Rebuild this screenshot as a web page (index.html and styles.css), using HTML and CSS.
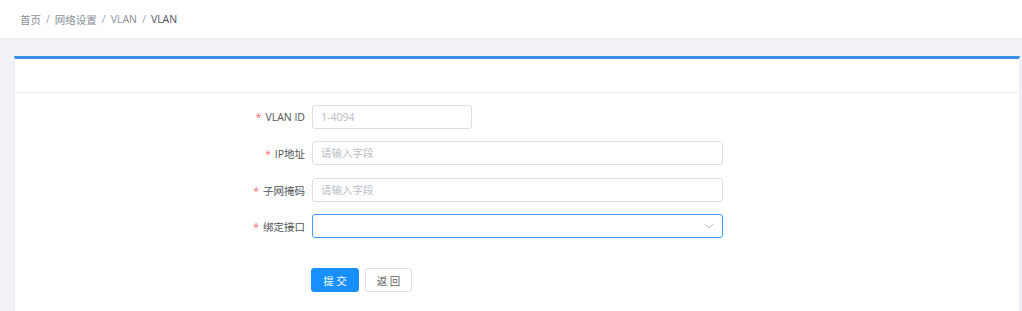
FILE: index.html
```html
<!DOCTYPE html>
<html lang="zh">
<head>
  <meta charset="UTF-8">
  <title>VLAN</title>
  <link rel="stylesheet" href="styles.css">
</head>
<body>
  <div class="header">
    <span class="crumb">首页</span><span class="sep">/</span>
    <span class="crumb">网络设置</span><span class="sep">/</span>
    <span class="crumb">VLAN</span><span class="sep">/</span>
    <span class="crumb current">VLAN</span>
  </div>
  <div class="main">
    <div class="card">
      <div class="card-head"></div>
      <div class="card-body">
        <div class="form-row">
          <label class="form-label"><span class="req">*</span>VLAN ID</label>
          <input class="input short" placeholder="1-4094">
        </div>
        <div class="form-row">
          <label class="form-label"><span class="req">*</span>IP地址</label>
          <input class="input" placeholder="请输入字段">
        </div>
        <div class="form-row">
          <label class="form-label"><span class="req">*</span>子网掩码</label>
          <input class="input" placeholder="请输入字段">
        </div>
        <div class="form-row">
          <label class="form-label"><span class="req">*</span>绑定接口</label>
          <div class="input select">
            <svg class="arrow" width="10" height="6" viewBox="0 0 10 6"><path d="M1 1 L5 5 L9 1" fill="none" stroke="#c0c4cc" stroke-width="1"/></svg>
          </div>
        </div>
        <div class="btn-row">
          <button class="btn primary">提 交</button>
          <button class="btn">返 回</button>
        </div>
      </div>
    </div>
  </div>
</body>
</html>
```

FILE: styles.css
```css
body {
  margin: 0;
  background: #f0f2f5;
  font-family: "Open Sans", "Noto Sans CJK SC", sans-serif;
  font-size: 10.5px;
  color: #606266;
}
.header {
  height: 39px;
  background: #fff;
  border-bottom: 1px solid #e8eaee;
  display: flex;
  align-items: center;
  padding-left: 20px;
  box-sizing: border-box;
}
.crumb {
  color: #8a8e96;
}
.crumb.current {
  color: #505358;
}
.sep {
  color: #a0a4aa;
  margin: 0 5px;
}
.main {
  padding: 17px 2px 0 14px;
}
.card {
  background: #fff;
  border-top: 3px solid #3a8ee6;
  border-left: 1px solid #ebeef5;
  border-right: 1px solid #ebeef5;
}
.card-head {
  height: 33px;
  border-bottom: 1px solid #ebeef5;
}
.card-body {
  padding: 12px 0 30px 0;
}
.form-row {
  display: flex;
  align-items: center;
  margin-bottom: 12px;
}
.form-row:nth-child(2) {
  margin-bottom: 13px;
}
.form-label {
  width: 297px;
  text-align: right;
  padding-right: 7px;
  box-sizing: border-box;
  color: #505358;
}
.req {
  color: #f56c6c;
  margin-right: 4px;
}
.input {
  width: 411px;
  height: 24px;
  border: 1px solid #dcdfe6;
  border-radius: 3px;
  padding: 0 8px;
  box-sizing: border-box;
  font-family: inherit;
  font-size: 10.5px;
  color: #606266;
  outline: none;
}
.input::placeholder {
  color: #b8bcc4;
}
.input.short {
  width: 160px;
}
.input.select {
  border-color: #409eff;
  display: flex;
  align-items: center;
  justify-content: flex-end;
  padding-right: 8px;
}
.btn-row {
  display: flex;
  gap: 6px;
  padding-left: 296px;
  margin-top: 30px;
}
.btn {
  width: 47px;
  height: 24px;
  border: 1px solid #dcdfe6;
  border-radius: 3px;
  background: #fff;
  color: #606266;
  font-family: inherit;
  font-size: 10.5px;
  padding: 0;
  cursor: pointer;
}
.btn.primary {
  width: 48px;
  background: #1890ff;
  border-color: #1890ff;
  color: #fff;
}
```
